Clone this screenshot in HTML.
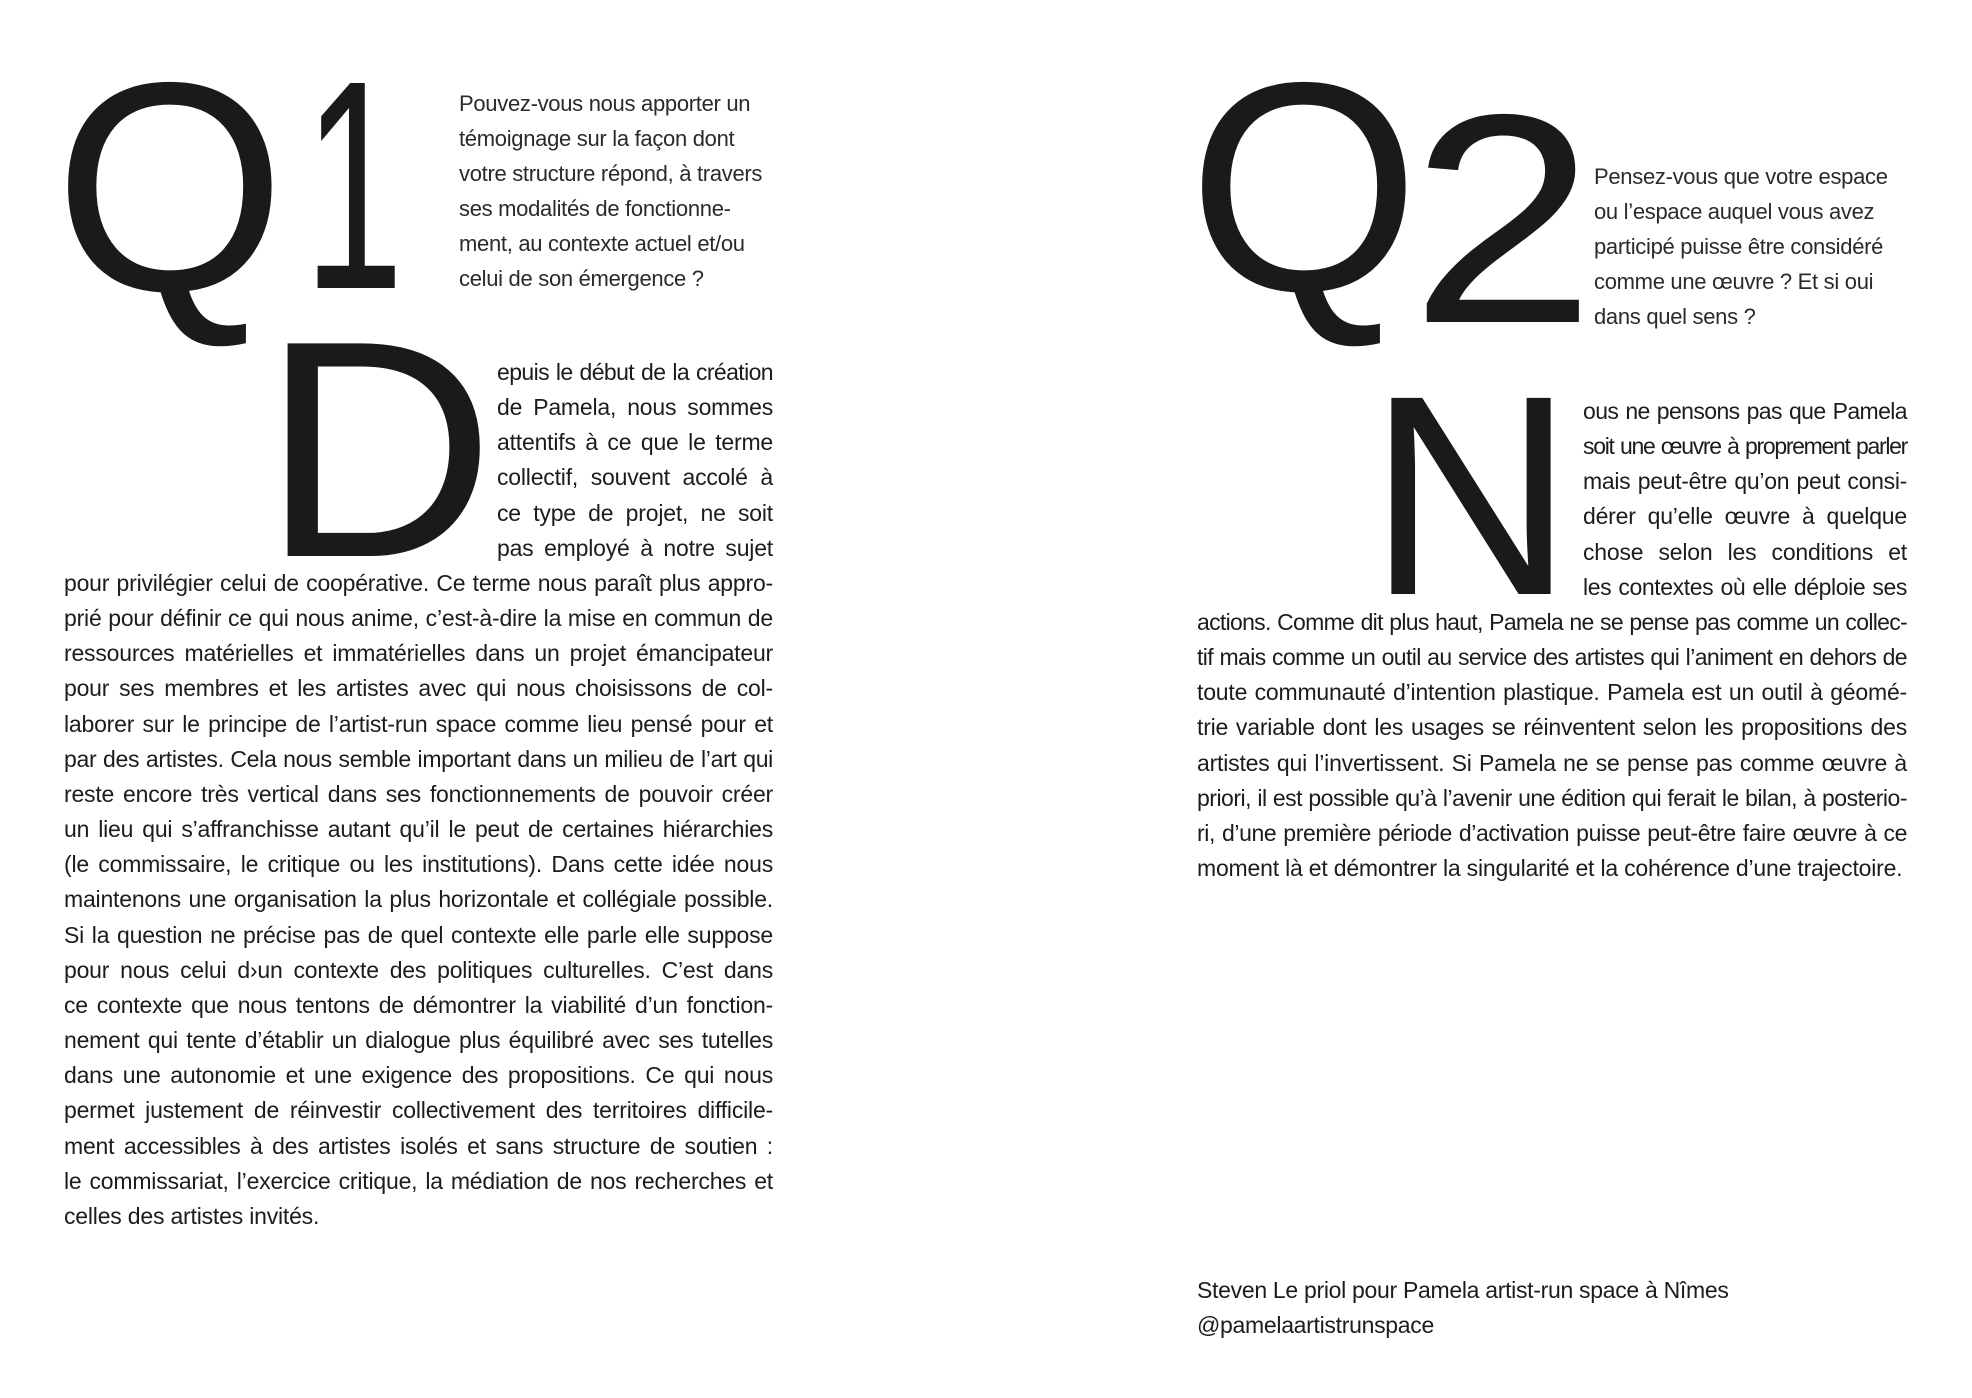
<!DOCTYPE html>
<html><head><meta charset="utf-8"><style>
html,body{margin:0;padding:0;background:#fff;}
body{width:1972px;height:1398px;position:relative;overflow:hidden;font-family:"Liberation Sans",sans-serif;color:#1c1c1c;}
.blk{position:absolute;font-size:23px;line-height:35.15px;}
.blk div{text-align:justify;text-align-last:justify;white-space:nowrap;}
.blk div.l{text-align-last:left;}
.q{position:absolute;font-size:22px;line-height:35px;color:#2a2a2a;white-space:nowrap;letter-spacing:-0.3px;}
svg{position:absolute;left:0;top:0;}
</style></head><body>
<svg width="1972" height="1398" font-family="Liberation Sans, sans-serif" fill="#1a1a1a">
<text x="54" y="290" font-size="298">Q</text>
<text transform="translate(304 288) scale(0.6 1)" font-size="298">1</text>
<text transform="translate(261 556) scale(1.05 1)" font-size="309">D</text>
<text x="1188" y="290" font-size="298">Q</text>
<text transform="translate(1410 322) scale(1.12 1)" font-size="298">2</text>
<text x="1368" y="594" font-size="285">N</text>
</svg>

<div class="q" style="left:459px;top:86px;">Pouvez-vous nous apporter un<br>témoignage sur la façon dont<br>votre structure répond, à travers<br>ses modalités de fonctionne-<br>ment, au contexte actuel et/ou<br>celui de son émergence ?</div>

<div class="q" style="left:1594px;top:159px;">Pensez-vous que votre espace<br>ou l’espace auquel vous avez<br>participé puisse être considéré<br>comme une œuvre ? Et si oui<br>dans quel sens ?</div>

<div class="blk" style="left:497px;top:355px;width:276px;">
<div>epuis le début de la création</div>
<div>de Pamela, nous sommes</div>
<div>attentifs à ce que le terme</div>
<div>collectif, souvent accolé à</div>
<div>ce type de projet, ne soit</div>
<div>pas employé à notre sujet</div>
</div>

<div class="blk" style="left:64px;top:566px;width:709px;">
<div>pour privilégier celui de coopérative. Ce terme nous paraît plus appro-</div>
<div>prié pour définir ce qui nous anime, c’est-à-dire la mise en commun de</div>
<div>ressources matérielles et immatérielles dans un projet émancipateur</div>
<div>pour ses membres et les artistes avec qui nous choisissons de col-</div>
<div>laborer sur le principe de l’artist-run space comme lieu pensé pour et</div>
<div>par des artistes. Cela nous semble important dans un milieu de l’art qui</div>
<div>reste encore très vertical dans ses fonctionnements de pouvoir créer</div>
<div>un lieu qui s’affranchisse autant qu’il le peut de certaines hiérarchies</div>
<div>(le commissaire, le critique ou les institutions). Dans cette idée nous</div>
<div>maintenons une organisation la plus horizontale et collégiale possible.</div>
<div>Si la question ne précise pas de quel contexte elle parle elle suppose</div>
<div>pour nous celui d›un contexte des politiques culturelles. C’est dans</div>
<div>ce contexte que nous tentons de démontrer la viabilité d’un fonction-</div>
<div>nement qui tente d’établir un dialogue plus équilibré avec ses tutelles</div>
<div>dans une autonomie et une exigence des propositions. Ce qui nous</div>
<div>permet justement de réinvestir collectivement des territoires difficile-</div>
<div>ment accessibles à des artistes isolés et sans structure de soutien :</div>
<div>le commissariat, l’exercice critique, la médiation de nos recherches et</div>
<div class="l">celles des artistes invités.</div>
</div>

<div class="blk" style="left:1583px;top:394px;width:324px;">
<div>ous ne pensons pas que Pamela</div>
<div>soit une œuvre à proprement parler</div>
<div>mais peut-être qu’on peut consi-</div>
<div>dérer qu’elle œuvre à quelque</div>
<div>chose selon les conditions et</div>
<div>les contextes où elle déploie ses</div>
</div>

<div class="blk" style="left:1197px;top:605px;width:710px;">
<div>actions. Comme dit plus haut, Pamela ne se pense pas comme un collec-</div>
<div>tif mais comme un outil au service des artistes qui l’animent en dehors de</div>
<div>toute communauté d’intention plastique. Pamela est un outil à géomé-</div>
<div>trie variable dont les usages se réinventent selon les propositions des</div>
<div>artistes qui l’invertissent. Si Pamela ne se pense pas comme œuvre à</div>
<div>priori, il est possible qu’à l’avenir une édition qui ferait le bilan, à posterio-</div>
<div>ri, d’une première période d’activation puisse peut-être faire œuvre à ce</div>
<div class="l">moment là et démontrer la singularité et la cohérence d’une trajectoire.</div>
</div>

<div class="q" style="left:1197px;top:1273px;line-height:35.3px;color:#1c1c1c;font-size:23px;">Steven Le priol pour Pamela artist-run space à Nîmes<br>@pamelaartistrunspace</div>
<script>
document.querySelectorAll('.blk div').forEach(function(d){
  var W=d.clientWidth;
  var s=document.createElement('span');
  s.style.whiteSpace='nowrap';
  s.textContent=d.textContent;
  document.body.appendChild(s);
  s.style.position='absolute';s.style.visibility='hidden';
  s.style.fontSize='23px';
  var ls=-0.2;
  s.style.letterSpacing=ls+'px';
  while(s.offsetWidth>W-4 && ls>-3){ls-=0.1;s.style.letterSpacing=ls+'px';}
  d.style.letterSpacing=ls+'px';
  s.remove();
});
</script>
</body></html>
